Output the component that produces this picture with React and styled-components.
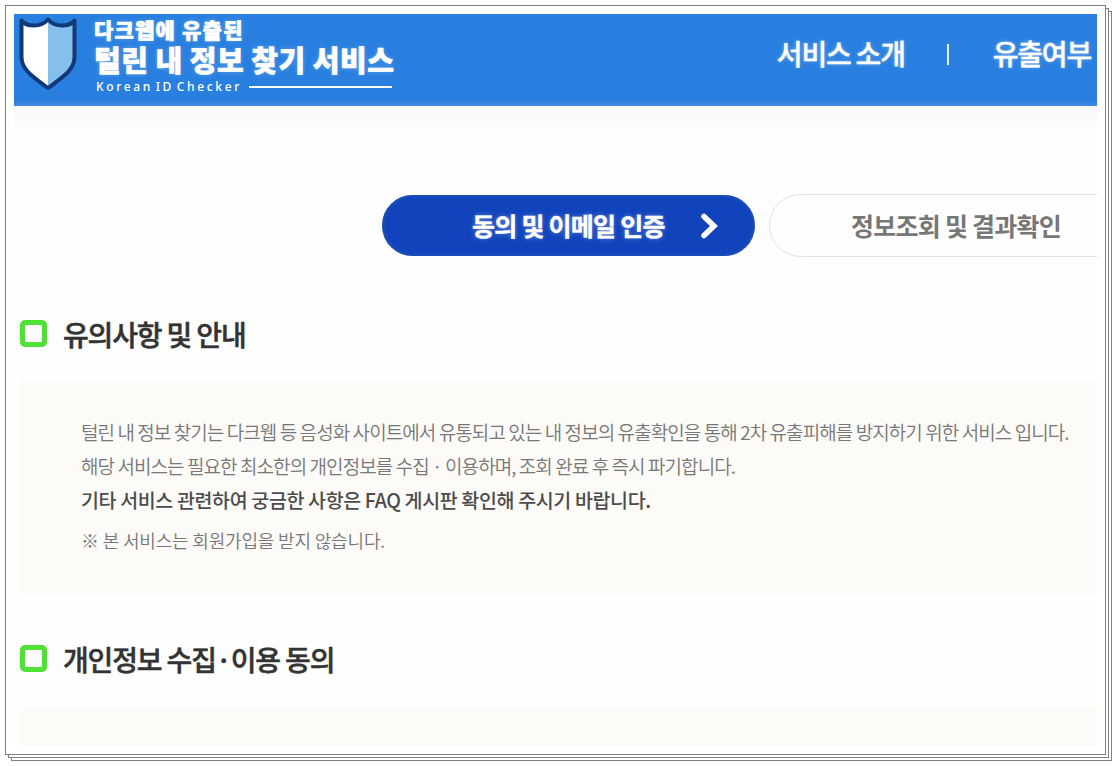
import React from 'react';
import styled, { createGlobalStyle } from 'styled-components';

const GlobalStyle = createGlobalStyle`
  *, *::before, *::after {
    box-sizing: border-box;
  }
  body {
    display: flow-root;
    min-height: 766px;
    margin: 0;
    background: #fff;
    font-family: "Noto Sans CJK KR", "Noto Sans", sans-serif;
  }
`;

const Sheet = styled.div`
  width: 1101px;
  height: 750px;
  margin: 5px 0 0 5px;
  padding: 8px;
  border: 1px solid #808080;
  background: #fff;
  box-shadow:
    3px 3px 0 -1px #fff,
    3px 3px 0 0 #808080,
    6px 6px 0 -1px #fff,
    6px 6px 0 0 #808080;
`;

const Page = styled.div`
  height: 732px;
  overflow: hidden;
  background: #fefefe;
`;

const Header = styled.header`
  display: flex;
  justify-content: space-between;
  height: 92px;
  background: linear-gradient(#287fe0 86px, #3c87e0 90px, #3c87e0);
  color: #fff;
  white-space: nowrap;
`;

const HeaderShade = styled.div`
  height: 24px;
  background: linear-gradient(#f8f8f8, #fefefe);
`;

const Brand = styled.div`
  display: flex;
  svg {
    display: block;
    margin: 2px 0 0 4px;
  }
`;

const BrandText = styled.div`
  padding: 2px 0 0 16px;
`;

const BrandLine = styled.div`
  height: ${({ $height }) => $height}px;
  line-height: ${({ $height }) => $height}px;
  font-size: ${({ $size }) => $size}px;
  letter-spacing: ${({ $spacing }) => $spacing}px;
  font-weight: 900;
  -webkit-text-stroke: 0.6px #fff;
  text-shadow: 0 0 5px rgba(255, 255, 255, 0.3);
`;

const BrandSub = styled.div`
  display: flex;
  align-items: center;
  height: 18px;
  margin-top: 1px;
  padding-left: 2px;
  font-family: "Noto Sans", sans-serif;
  font-size: 12px;
  font-weight: 500;
  letter-spacing: 2.65px;
  word-spacing: -3px;
  &::after {
    content: '';
    width: 143px;
    height: 2px;
    margin: 2px 0 0 7px;
    background: #fff;
  }
`;

const Nav = styled.nav`
  display: flex;
  align-items: center;
  height: 80px;
  padding-right: 6px;
`;

const NavItem = styled.span`
  margin-top: -2px;
  font-size: 28px;
  font-weight: 500;
  letter-spacing: -1.2px;
  -webkit-text-stroke: 0.4px #fff;
  text-shadow: 0 0 4px rgba(255, 255, 255, 0.4);
`;

const NavDivider = styled.i`
  width: 2px;
  height: 21px;
  margin: 0 44px 0 42px;
  background: #e6f0fb;
`;

const Steps = styled.div`
  display: flex;
  gap: 14px;
  height: 63px;
  margin: 64px 0 0 368px;
`;

const Step = styled.div`
  display: flex;
  flex: none;
  align-items: center;
  font-size: 25px;
  font-weight: 700;
  letter-spacing: -0.75px;
  white-space: nowrap;
`;

const ActiveStep = styled(Step)`
  width: 373px;
  height: 61px;
  margin-top: 1px;
  padding: 0 0 2px 90px;
  border-radius: 31px;
  background: #1143bc;
  box-shadow: inset 0 0 5px #2c5cb4;
  color: #fff;
  -webkit-text-stroke: 0.4px #fff;
  text-shadow: 0 0 5px rgba(255, 255, 255, 0.4);
  svg {
    margin: 3px 0 0 35px;
  }
`;

const NextStep = styled(Step)`
  width: 373px;
  padding: 0 0 2px 81px;
  border: 1px solid #e2e2e2;
  border-radius: 32px;
  background: #fefefe;
  color: #777;
`;

const SectionTitle = styled.h2`
  display: flex;
  align-items: center;
  gap: 16px;
  height: 40px;
  margin: ${({ $top }) => $top}px 0 0 6px;
  color: #333;
  font-size: 28px;
  font-weight: 500;
  letter-spacing: -1.15px;
  -webkit-text-stroke: 0.5px #333;
  &::before {
    content: '';
    width: 27px;
    height: 27px;
    margin-top: -1px;
    border: 5px solid #50e137;
    border-radius: 5px;
  }
`;

const Panel = styled.section`
  height: ${({ $height }) => $height}px;
  margin: ${({ $top }) => $top}px 0 0 5px;
  padding: 34px 0 0 62px;
  background: #fcfbf8;
`;

const Line = styled.p`
  height: 34px;
  margin: ${({ $top }) => $top || 0}px 0 0;
  color: ${({ $strong }) => ($strong ? '#4c4c4c' : '#777')};
  font-size: ${({ $size }) => $size || 19}px;
  font-weight: ${({ $strong }) => ($strong ? 500 : 350)};
  line-height: 34px;
  letter-spacing: ${({ $spacing }) => $spacing}px;
  white-space: nowrap;
`;

const ShieldIcon = () => (
  <svg width="60" height="76" viewBox="0 0 60 76">
    <path
      d="M30 3.500C26 8 21 9.500 16 9.500C10 9.500 6 8 3.500 4.500V41C3.500 54 15 61 30 72C45 61 56.500 54 56.500 41V4.500C54 8 50 9.500 44 9.500C39 9.500 34 8 30 3.500Z"
      fill="#fff"
    />
    <path
      d="M30 3.500C34 8 39 9.500 44 9.500C50 9.500 54 8 56.500 4.500V41C56.500 54 45 61 30 72Z"
      fill="#85bfec"
    />
    <path
      d="M30 3.500C26 8 21 9.500 16 9.500C10 9.500 6 8 3.500 4.500V41C3.500 54 15 61 30 72C45 61 56.500 54 56.500 41V4.500C54 8 50 9.500 44 9.500C39 9.500 34 8 30 3.500Z"
      fill="none"
      stroke="#113878"
      strokeWidth="4"
      strokeLinejoin="round"
    />
  </svg>
);

const ArrowIcon = () => (
  <svg width="20" height="26" viewBox="0 0 20 26">
    <path
      d="M4 3.500L14 13L4 22.500"
      fill="none"
      stroke="#fff"
      strokeWidth="5.500"
      strokeLinecap="round"
    />
  </svg>
);

const App = () => (
  <>
    <GlobalStyle />
    <Sheet>
      <Page>
        <Header>
          <Brand>
            <ShieldIcon />
            <BrandText>
              <BrandLine $height={26} $size={21} $spacing={1.2}>다크웹에 유출된</BrandLine>
              <BrandLine $height={34} $size={29} $spacing={0.5}>털린 내 정보 찾기 서비스</BrandLine>
              <BrandSub>Korean ID Checker</BrandSub>
            </BrandText>
          </Brand>
          <Nav>
            <NavItem>서비스 소개</NavItem>
            <NavDivider />
            <NavItem>유출여부</NavItem>
          </Nav>
        </Header>
        <HeaderShade />
        <Steps>
          <ActiveStep>
            동의 및 이메일 인증
            <ArrowIcon />
          </ActiveStep>
          <NextStep>정보조회 및 결과확인</NextStep>
        </Steps>
        <SectionTitle $top={57}>유의사항 및 안내</SectionTitle>
        <Panel $top={27} $height={212}>
          <Line $spacing={-0.92}>
            털린 내 정보 찾기는 다크웹 등 음성화 사이트에서 유통되고 있는 내 정보의 유출확인을 통해 2차 유출피해를 방지하기 위한 서비스 입니다.
          </Line>
          <Line $spacing={-0.92}>
            해당 서비스는 필요한 최소한의 개인정보를 수집 · 이용하며, 조회 완료 후 즉시 파기합니다.
          </Line>
          <Line $strong $size={19.5} $spacing={-0.36}>
            기타 서비스 관련하여 궁금한 사항은 FAQ 게시판 확인해 주시기 바랍니다.
          </Line>
          <Line $top={6} $size={18} $spacing={-0.17}>※ 본 서비스는 회원가입을 받지 않습니다.</Line>
        </Panel>
        <SectionTitle $top={46}>개인정보 수집·이용 동의</SectionTitle>
        <Panel $top={28} $height={39} />
      </Page>
    </Sheet>
  </>
);

export default App;
